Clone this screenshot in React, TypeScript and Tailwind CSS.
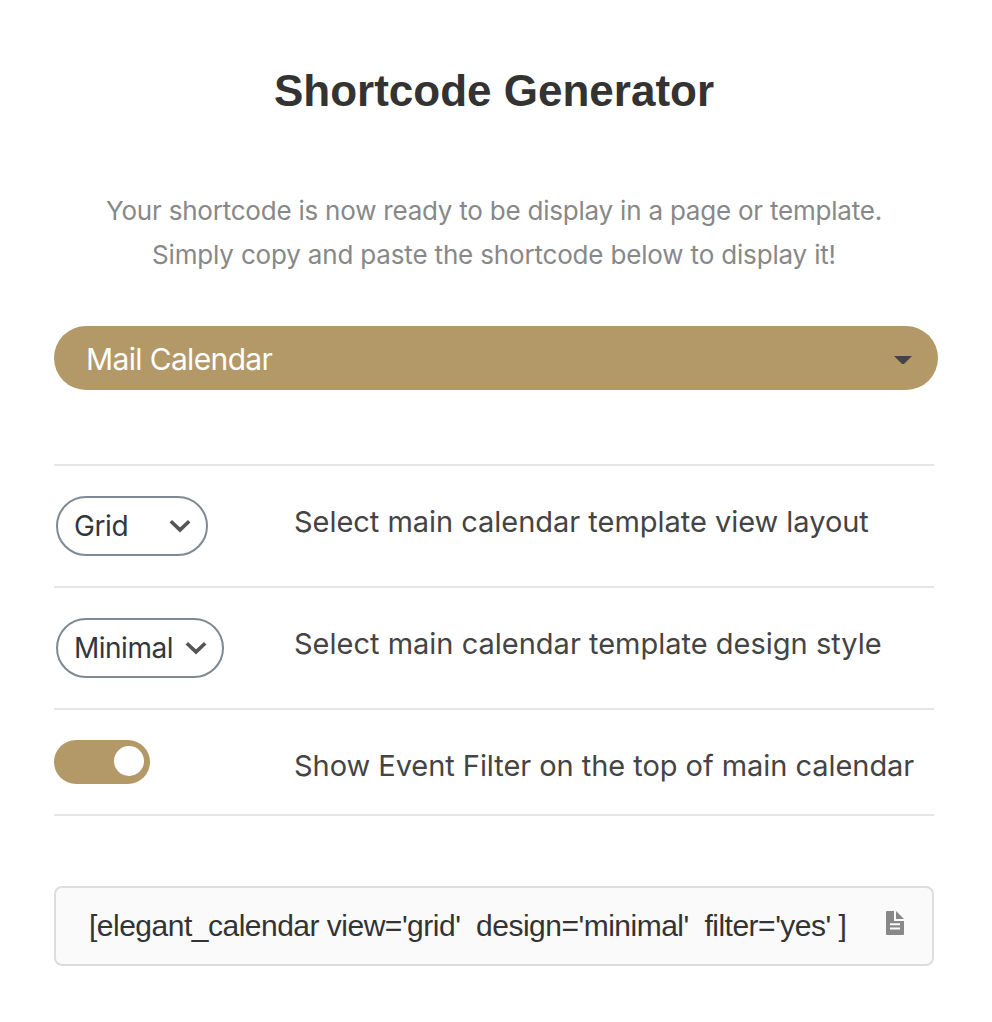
function Chevron() {
  return (
    <svg className="block shrink-0" width="22" height="14" viewBox="0 0 22 14" fill="none">
      <path d="M1.8 2.2L11 10.9L20.2 2.2" stroke="#555" strokeWidth="3.6" />
    </svg>
  );
}

function DocumentIcon() {
  return (
    <svg className="mb-[7px] block shrink-0" width="18" height="24" viewBox="0 0 18 24">
      <path d="M1 0H8V10H18V23Q18 24 17 24H1Q0 24 0 23V1Q0 0 1 0Z" fill="#888" />
      <path d="M10 0L18 8H10Z" fill="#888" />
      <path d="M4 13.2H14M4 17.5H14" stroke="#fafafa" strokeWidth="1.9" />
    </svg>
  );
}

function SelectPill({ value, className }: { value: string; className: string }) {
  return (
    <div className={`flex h-[60px] items-center justify-between rounded-full border-2 border-[#7e8993] pr-[15px] pl-[16px] text-[28px] text-[#32373c] ${className}`}>
      <span>{value}</span>
      <Chevron />
    </div>
  );
}

export default function App() {
  return (
    <main className="h-[1022px] w-[992px] bg-white px-[54px] pt-[60px] font-['Inter',sans-serif] text-[#444]">
      <h1 className="h-[62px] w-[880px] text-center font-['Liberation_Sans',sans-serif] text-[44px] leading-[62px] font-bold whitespace-nowrap text-[#333]">Shortcode Generator</h1>
      <div className="mt-[67px] w-[880px] text-center text-[26px] leading-[44px] whitespace-nowrap text-[#888]">
        <p className="tracking-[-0.22px]">Your shortcode is now ready to be display in a page or template.</p>
        <p className="tracking-[-0.17px]">Simply copy and paste the shortcode below to display it!</p>
      </div>
      <div className="mt-[49px] flex h-[64px] w-[884px] items-center justify-between rounded-full bg-[#b39967] pr-[26px] pl-[32px] text-[30px] text-white">
        <span className="pt-[2px] tracking-[-0.65px]">Mail Calendar</span>
        <svg className="mt-[3px]" width="18" height="8" viewBox="0 0 18 8"><path d="M0 0H18L10.5 7.5Q9 8.5 7.5 7.5Z" fill="#444" /></svg>
      </div>
      <div className="mt-[74px] w-[880px] border-t-2 border-[#e5e5e5]">
        <div className="flex h-[122px] border-b-2 border-[#e5e5e5] pt-[30px]">
          <div className="w-[240px] pl-[2px]">
            <SelectPill value="Grid" className="w-[152px] tracking-[-0.4px]" />
          </div>
          <p className="text-[29px] leading-[52px] tracking-[-0.03px] whitespace-nowrap">Select main calendar template view layout</p>
        </div>
        <div className="flex h-[122px] border-b-2 border-[#e5e5e5] pt-[30px]">
          <div className="w-[240px] pl-[2px]">
            <SelectPill value="Minimal" className="w-[168px] tracking-[-0.5px]" />
          </div>
          <p className="text-[29px] leading-[52px] whitespace-nowrap">Select main calendar template design style</p>
        </div>
        <div className="flex h-[106px] border-b-2 border-[#e5e5e5] pt-[30px]">
          <div className="w-[240px]">
            <div className="flex h-[44px] w-[96px] justify-end rounded-full bg-[#b39967] pt-[6px] pr-[6px]">
              <span className="size-[30px] rounded-full bg-white" />
            </div>
          </div>
          <p className="text-[29px] leading-[52px] tracking-[-0.05px] whitespace-nowrap">Show Event Filter on the top of main calendar</p>
        </div>
      </div>
      <div className="mt-[70px] flex h-[80px] w-[880px] items-center justify-between rounded-[8px] border-2 border-[#ddd] bg-[#fafafa] pr-[28px] pl-[33px]">
        <code className="pb-[2px] font-['Liberation_Sans',sans-serif] text-[30px] tracking-[-0.5px] whitespace-pre text-[#333]">{"[elegant_calendar view='grid'  design='minimal'  filter='yes' ]"}</code>
        <DocumentIcon />
      </div>
    </main>
  );
}
